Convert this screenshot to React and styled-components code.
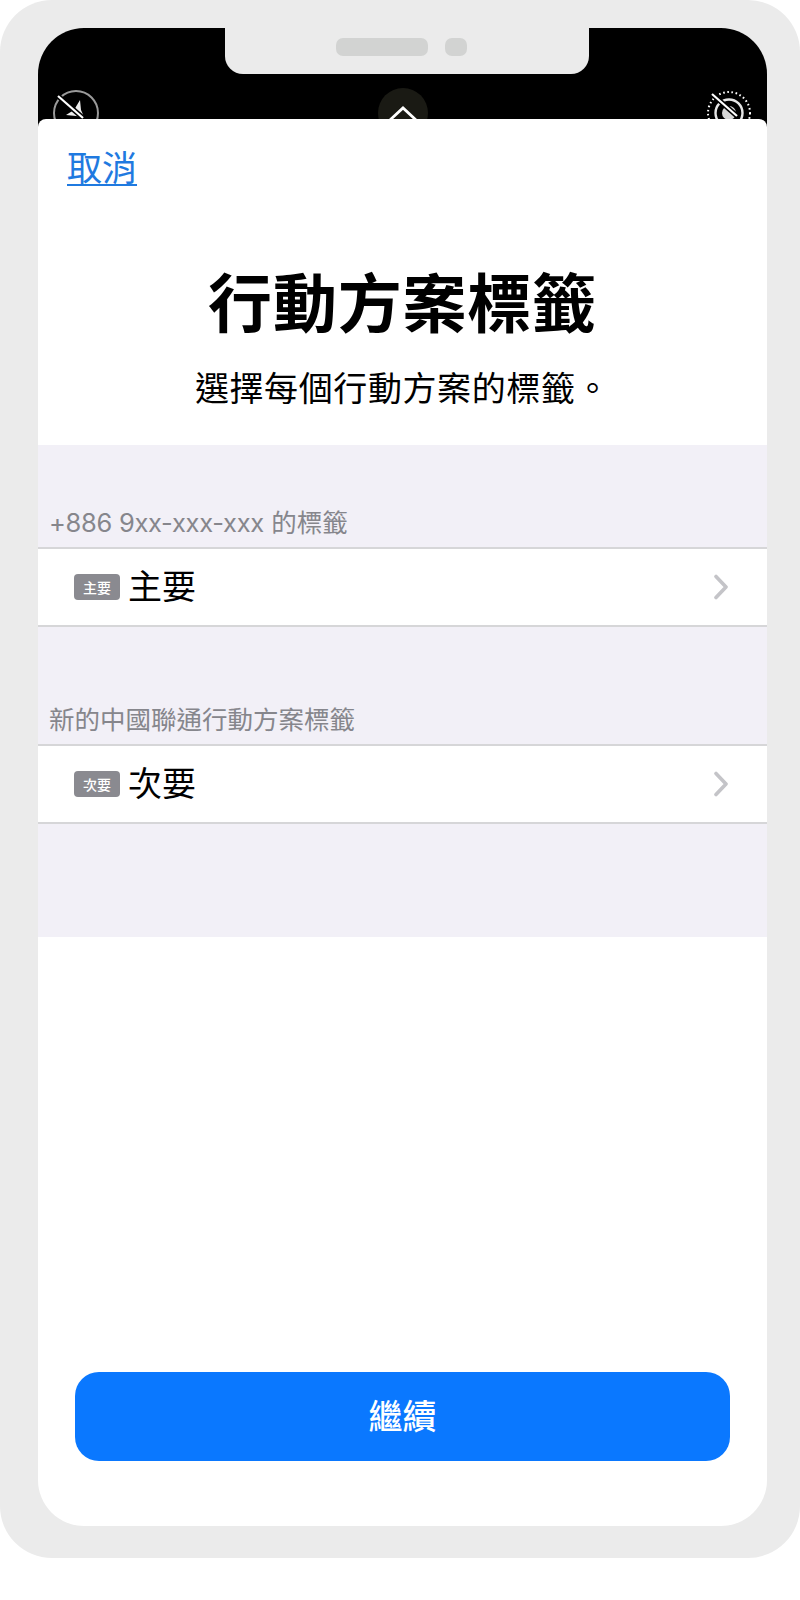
import React from "react";
import styled, { createGlobalStyle } from "styled-components";

const Global = createGlobalStyle`
  html, body { margin: 0; padding: 0; background: #fff; }
  body { font-family: "Noto Sans CJK TC", "Inter", sans-serif; }
`;
const CJK = `"Noto Sans CJK TC", sans-serif`;

const Frame = styled.div`
  width: 800px; height: 1558px; box-sizing: border-box;
  background: #ebebeb; border-radius: 52px;
  padding: 28px 33px 32px 38px;
`;
const Screen = styled.div`
  position: relative; height: 100%;
  display: flex; flex-direction: column;
`;
const Notch = styled.div`
  position: absolute; top: 0; left: 187px;
  width: 364px; height: 46px;
  background: #ebebeb; border-radius: 0 0 18px 18px;
  display: flex; align-items: center; justify-content: center; gap: 17px;
  padding: 0 11px 8px 0; box-sizing: border-box;
`;
const Speaker = styled.div`
  width: ${p => p.$w}px; height: 18px; background: #d2d3d2; border-radius: 7px;
`;
const Bar = styled.div`
  height: 103px; margin-bottom: -12px; flex: none; box-sizing: border-box;
  padding: 60px 15px 0 15px;
  background: #000; border-radius: 46px 46px 0 0;
  display: flex; justify-content: space-between; align-items: flex-start;
  overflow: hidden;
`;
const SideIcon = styled.svg`
  margin-top: 2px; flex: none;
`;
const Sheet = styled.div`
  position: relative; flex: 1; background: #fff; border-radius: 8px 8px 46px 46px;
  display: flex; flex-direction: column;
`;
const Cancel = styled.a`
  align-self: flex-start; margin: 24px 0 0 29px;
  font: 400 35px/46px ${CJK}; color: #1f7ae0; text-decoration: underline;
  text-decoration-thickness: 2px; text-underline-offset: 3px;
`;
const Title = styled.h1`
  margin: 68px 0 0; text-align: center;
  font: 700 64px/84px ${CJK}; color: #000; letter-spacing: .8px;
`;
const Subtitle = styled.p`
  margin: 21px 0 0; text-align: center;
  font: 400 34px/50px ${CJK}; color: #000; letter-spacing: .6px;
`;
const Groups = styled.div`
  margin-top: 33px; height: 492px; background: #f2f0f7;
`;
const SectionLabel = styled.div`
  box-sizing: border-box; height: ${p => p.$h}px;
  padding: 0 0 5px 11px;
  display: flex; align-items: flex-end; white-space: pre;
  font: 400 25.5px/38px Inter, ${CJK}; color: #86868c;
`;
const LabelNumber = styled.span`
  letter-spacing: -.3px;
`;
const Row = styled.div`
  box-sizing: border-box; height: 80px; background: #fff;
  border-top: 2px solid #d6d6d8; border-bottom: 2px solid #d6d6d8;
  display: flex; align-items: center; padding: 0 38px 0 36px;
`;
const Badge = styled.span`
  width: 46px; height: 26px; border-radius: 4px; background: #8a8a90; color: #fff;
  display: flex; align-items: center; justify-content: center;
  font: 500 14px/1 ${CJK}; margin-right: 8px;
`;
const RowText = styled.span`
  flex: 1; font: 400 34px/46px ${CJK}; color: #000; padding-bottom: 5px;
`;
const Footer = styled.div`
  flex: 1; display: flex; align-items: flex-end; padding: 0 37px 65px;
`;
const Primary = styled.button`
  width: 100%; height: 89px; border: 0; border-radius: 24px; padding: 0 0 3px 0;
  background: #0a78ff; color: #fff; font: 500 34px/1 ${CJK};
`;

const Chevron = () => (
  <svg width="16" height="26" viewBox="0 0 16 26" fill="none" stroke="#c4c4c8" strokeWidth="3.6" strokeLinecap="round" strokeLinejoin="round">
    <path d="M3 2.5 13 13 3 23.5" />
  </svg>
);
const FlashOff = () => (
  <SideIcon width="46" height="46" viewBox="0 0 46 46" fill="none">
    <circle cx="23" cy="23" r="22" stroke="#9a9a9a" strokeWidth="2" />
    <path d="M27 10 21 20 13 25 23 26 31 27 28 20z" fill="#ececec" />
    <path d="M5 6 30 28" stroke="#000" strokeWidth="5" />
    <path d="M5 6 30 28" stroke="#fff" strokeWidth="2.2" />
  </SideIcon>
);
const ArrowUp = () => (
  <svg width="50" height="50" viewBox="0 0 50 50" fill="none">
    <circle cx="25" cy="25" r="25" fill="#1a1a14" />
    <path d="M12 32 25 20 38 32" stroke="#fff" strokeWidth="2.8" />
  </svg>
);
const LiveOff = () => (
  <SideIcon width="46" height="46" viewBox="0 0 46 46" fill="none">
    <circle cx="23" cy="23" r="21" stroke="#fff" strokeWidth="2" strokeDasharray="1.6 2.6" />
    <circle cx="23" cy="23" r="13.5" stroke="#e6e6e6" strokeWidth="2.4" />
    <circle cx="23" cy="23" r="7" fill="#d8d8d8" />
    <path d="M6 4 31 26" stroke="#000" strokeWidth="5" />
    <path d="M6 4 31 26" stroke="#fff" strokeWidth="2.2" />
  </SideIcon>
);

export default function App() {
  return (
    <>
      <Global />
      <Frame>
        <Screen>
          <Bar>
            <FlashOff />
            <ArrowUp />
            <LiveOff />
          </Bar>
          <Notch>
            <Speaker $w={92} />
            <Speaker $w={22} />
          </Notch>
          <Sheet>
            <Cancel href="#">取消</Cancel>
            <Title>行動方案標籤</Title>
            <Subtitle>選擇每個行動方案的標籤。</Subtitle>
            <Groups>
              <SectionLabel $h={102}><LabelNumber>+886 9xx-xxx-xxx</LabelNumber> 的標籤</SectionLabel>
              <Row>
                <Badge>主要</Badge>
                <RowText>主要</RowText>
                <Chevron />
              </Row>
              <SectionLabel $h={117}>新的中國聯通行動方案標籤</SectionLabel>
              <Row>
                <Badge>次要</Badge>
                <RowText>次要</RowText>
                <Chevron />
              </Row>
            </Groups>
            <Footer>
              <Primary>繼續</Primary>
            </Footer>
          </Sheet>
        </Screen>
      </Frame>
    </>
  );
}
